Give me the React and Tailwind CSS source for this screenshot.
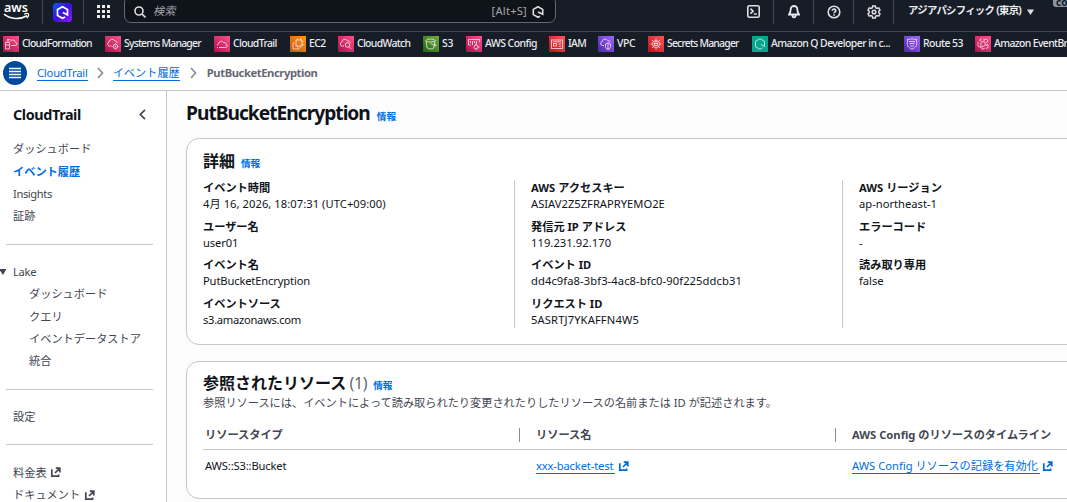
import React from "react";

const services = [
  { name: "CloudFormation", icon: "formation", width: "w-[102px]", color: "bg-linear-to-tr from-[#b0084d] to-[#ff4f8b]", tracking: "tracking-[-0.75px]" },
  { name: "Systems Manager", icon: "systems", width: "w-[109px]", color: "bg-linear-to-tr from-[#b0084d] to-[#ff4f8b]", tracking: "tracking-[-0.78px]" },
  { name: "CloudTrail", icon: "trail", width: "w-[76px]", color: "bg-linear-to-tr from-[#b0084d] to-[#ff4f8b]", tracking: "tracking-[-0.6px]" },
  { name: "EC2", icon: "ec2", width: "w-[48px]", color: "bg-linear-to-tr from-[#c8511b] to-[#ff9900]", tracking: "tracking-[-0.6px]" },
  { name: "CloudWatch", icon: "watch", width: "w-[85px]", color: "bg-linear-to-tr from-[#b0084d] to-[#ff4f8b]", tracking: "tracking-[-0.65px]" },
  { name: "S3", icon: "s3", width: "w-[43px]", color: "bg-linear-to-tr from-[#1b660f] to-[#6cae3e]", tracking: "tracking-[-0.3px]" },
  { name: "AWS Config", icon: "config", width: "w-[83px]", color: "bg-linear-to-tr from-[#b0084d] to-[#ff4f8b]", tracking: "tracking-[-0.5px]" },
  { name: "IAM", icon: "iam", width: "w-[49px]", color: "bg-linear-to-tr from-[#bd0816] to-[#ff5252]", tracking: "tracking-[-0.6px]" },
  { name: "VPC", icon: "vpc", width: "w-[50px]", color: "bg-linear-to-tr from-[#4d27a8] to-[#a166ff]", tracking: "tracking-[-0.4px]" },
  { name: "Secrets Manager", icon: "secrets", width: "w-[104px]", color: "bg-linear-to-tr from-[#bd0816] to-[#ff5252]", tracking: "tracking-[-0.78px]" },
  { name: "Amazon Q Developer in c...", icon: "q", width: "w-[152px]", color: "bg-[#01a88d]", tracking: "tracking-[-0.54px]" },
  { name: "Route 53", icon: "route", width: "w-[71px]", color: "bg-linear-to-tr from-[#4d27a8] to-[#a166ff]", tracking: "tracking-[-0.5px]" },
  { name: "Amazon EventBridge", icon: "bridge", width: "w-[130px]", color: "bg-linear-to-tr from-[#b0084d] to-[#ff4f8b]", tracking: "tracking-[-0.62px]" },
];

const glyphs = {
  formation: (
    <>
      <path d="M2.5 6.5h4v6.5h-4zM2.5 9h4M4 3.5h3.5M3.5 5h3" />
      <path d="M8 9.5h4a1.6 1.6 0 0 0 .4-3.2A2.7 2.7 0 0 0 7.3 5.5" />
    </>
  ),
  systems: (
    <>
      <path d="M6.5 10H4.4a2 2 0 0 1-.3-3.9A3 3 0 0 1 9.8 5a2 2 0 0 1 2.3 2" />
      <circle cx="10.4" cy="10.4" r="2.2" />
      <circle cx="10.4" cy="10.4" r=".5" />
      <path d="M10.4 7.5v.8M10.4 12.5v.9M7.5 10.4h.8M12.5 10.4h.9" />
    </>
  ),
  trail: <path d="M5 11.5h6.5a1.7 1.7 0 0 0 .5-3.3 1.8 1.8 0 0 0-2.3-1.6 2.6 2.6 0 0 0-4.9 1.1 1.9 1.9 0 0 0-1.6 1.6M3 11.5h1" />,
  ec2: (
    <>
      <rect x="6" y="4" width="6" height="6" />
      <path d="M4.5 7H3v6h6v-1.5M7.5 4V2.5M10.5 4V2.5M12 5.5h1.5M12 8.5h1.5M7.5 10v1.5M10.5 10v1.5" />
    </>
  ),
  watch: (
    <>
      <path d="M6 10H4a2 2 0 0 1-.2-3.9A3 3 0 0 1 9.5 5a2 2 0 0 1 2.7 1.8" />
      <circle cx="9.5" cy="9" r="2.3" />
      <path d="m11.2 10.8 2 2.2" />
    </>
  ),
  s3: (
    <>
      <ellipse cx="7.5" cy="4.5" rx="4.5" ry="1.5" />
      <path d="m3 4.5 1.2 7.5c.3 1.3 6.3 1.3 6.6 0L12 4.5M7.5 7.5l5 2.3c1.3.3.5-1.3-.6-1.8" />
    </>
  ),
  config: (
    <>
      <path d="M2.5 9V3.5h11V6M4.5 5v2M6.5 5v4M8.5 5v2M10.5 5v3M2.5 9H5" />
      <circle cx="10" cy="11" r="2" />
      <path d="M10 9V7.5M10 13v.8M12 11h1.5" />
    </>
  ),
  iam: (
    <>
      <rect x="2.5" y="4" width="11" height="8.5" />
      <rect x="4.5" y="7.5" width="3" height="2.5" />
      <path d="M4 5.8h8M9.5 8h2.5M9.5 10.3h2.5" />
    </>
  ),
  vpc: (
    <>
      <path d="M6 9.5H4.3a2 2 0 0 1-.2-3.9A3 3 0 0 1 9.7 4.6 2 2 0 0 1 12 6.3" />
      <path d="M10 7 7.5 8v2.5c0 1.5 1 2.4 2.5 3 1.5-.6 2.5-1.5 2.5-3V8zM10 7v6.5" />
    </>
  ),
  secrets: (
    <>
      <circle cx="8" cy="8" r="3.5" />
      <rect x="6.5" y="7.5" width="3" height="2" />
      <path d="M7 7.5v-1a1 1 0 0 1 2 0v1M8 2.5v2M8 11.5v2M2.5 8h2M11.5 8h2M4 4l1.5 1.5M12 4l-1.5 1.5M4 12l1.5-1.5M12 12l-1.5-1.5" />
    </>
  ),
  q: <path d="m10.5 11.8-2.5 1.5-4.5-2.6V5.3L8 2.7l4.5 2.6v5.2L8.8 8.3" />,
  route: <path d="M3.5 3c1.5 1 3 .3 4.5-.5 1.5.8 3 1.5 4.5.5v3.5c1 3-1 5-4.5 6.8C4.5 11.5 2.5 9.5 3.5 6.5zM5 5.5h6M5.5 7.5h5M6 9.5c1.3 1 2.7 1 4 0" />,
  bridge: (
    <>
      <path d="M8 5.5 10.2 6.7v2.6L8 10.5 5.8 9.3V6.7z" />
      <path d="M7 2.5 4.5 4l2 1.3M9 2.5v3M9 4l2.500-1 1.500 2-2 2M3 6v4l2.700 1.500V10M7 10.500v3l3-1.500M10.500 9.500 13 8.500v3l-2 1" />
    </>
  ),
};

const details = [
  [
    { label: "イベント時間", value: "4月 16, 2026, 18:07:31 (UTC+09:00)", tracking: "tracking-[0.05px]" },
    { label: "ユーザー名", value: "user01", tracking: "tracking-[-0.1px]" },
    { label: "イベント名", value: "PutBucketEncryption", tracking: "tracking-[-0.15px]" },
    { label: "イベントソース", value: "s3.amazonaws.com", tracking: "tracking-[-0.3px]" },
  ],
  [
    { label: "AWS アクセスキー", value: "ASIAV2Z5ZFRAPRYEMO2E" },
    { label: "発信元 IP アドレス", value: "119.231.92.170", tracking: "tracking-[0.05px]" },
    { label: "イベント ID", value: "dd4c9fa8-3bf3-4ac8-bfc0-90f225ddcb31", tracking: "tracking-[0.08px]" },
    { label: "リクエスト ID", value: "5ASRTJ7YKAFFN4W5", tracking: "tracking-[0.12px]" },
  ],
  [
    { label: "AWS リージョン", value: "ap-northeast-1" },
    { label: "エラーコード", value: "-" },
    { label: "読み取り専用", value: "false" },
  ],
];

function External() {
  return (
    <svg width="11" height="11" viewBox="0 0 11 11" fill="none" stroke="currentColor" strokeWidth="1.7">
      <path d="M1.8 2.2v7h6.8V7.5M5.8 1.200h4v4.300M9.600 1.400 5 6" />
    </svg>
  );
}

function Chevron() {
  return (
    <svg width="7" height="12" viewBox="0 0 7 12" fill="none" stroke="#8c8c94" strokeWidth="1.7">
      <path d="m1 1 4.5 5L1 11" />
    </svg>
  );
}

function Info() {
  return <a className="text-[9.6px] font-bold text-[#006ce0]">情報</a>;
}

function TopBar() {
  return (
    <div className="flex h-[31px] shrink-0 overflow-hidden text-[#ebebf0]">
      <svg width="42" height="24" viewBox="0 0 42 24" className="shrink-0">
        <text x="4" y="12" fontSize="12" fontWeight="600" fill="#fff" textLength="24" lengthAdjust="spacingAndGlyphs">
          aws
        </text>
        <path d="M4 14.2c7 5.500 16 5.500 23 1.600" stroke="#fff" strokeWidth="1.6" fill="none" />
        <path d="M24 14.2c2-.8 4-.8 4.400-.2.400.800-.4 2.800-1.600 4" stroke="#fff" strokeWidth="1.2" fill="none" />
      </svg>
      <div className="flex h-6 w-[42px] shrink-0 items-center justify-center border-x border-[#424650]">
        <svg width="19" height="19" viewBox="0 0 19 19" className="-ml-px">
          <defs>
            <linearGradient id="tile" x1="0" y1="0" x2="1" y2="1">
              <stop offset="0" stopColor="#0a5cf5" />
              <stop offset=".5" stopColor="#3b10d8" />
              <stop offset="1" stopColor="#8a1cff" />
            </linearGradient>
          </defs>
          <rect width="19" height="19" rx="3.5" fill="url(#tile)" />
          <path d="m12 14-2.500 1.300-5-2.900V6.600l5-2.900 5 2.900v5.200L9.800 9.500" stroke="#fff" strokeWidth="1.7" fill="none" />
        </svg>
      </div>
      <svg width="40" height="24" viewBox="0 0 40 24" fill="#ebebf0" className="shrink-0">
        <path d="M13 5h3v3h-3zM18 5h3v3h-3zM23 5h3v3h-3zM13 10h3v3h-3zM18 10h3v3h-3zM23 10h3v3h-3zM13 15h3v3h-3zM18 15h3v3h-3zM23 15h3v3h-3z" />
      </svg>
      <div className="-mt-1 flex h-[27px] w-[432px] shrink-0 items-center rounded-[7px] border border-[#656871] bg-[#0f141a] pt-[4px] pr-[11px] pl-[9px]">
        <svg width="12" height="12" viewBox="0 0 12 12" fill="none" stroke="#dedee3" strokeWidth="1.6">
          <circle cx="5" cy="5" r="4" />
          <path d="m8 8 3.500 3.500" />
        </svg>
        <span className="ml-[7px] grow text-[11.2px] text-[#a4a4ad] italic">検索</span>
        <span className="mr-[5px] text-[11.2px] tracking-[0.2px] text-[#a4a4ad]">[Alt+S]</span>
        <svg width="12" height="12" viewBox="0 0 12 12" fill="none" stroke="#dedee3" strokeWidth="1.6">
          <path d="M8 10.300 6 11.300 1.300 8.600V3.400L6 .7l4.700 2.700v4.800L6 6" />
        </svg>
      </div>
      <div className="ml-[178px] flex h-6 w-10 shrink-0 items-center justify-center border-r border-[#424650]">
        <svg width="13" height="13" viewBox="0 0 13 13" fill="none" stroke="#dedee3" strokeWidth="1.6" className="-mt-px">
          <rect x=".8" y=".8" width="11.4" height="11.4" rx="1.5" />
          <path d="m3.500 3.700 2.600 2.500L3.500 8.700M6.800 9h3" />
        </svg>
      </div>
      <div className="flex h-6 w-10 shrink-0 items-center justify-center border-r border-[#424650]">
        <svg width="12" height="14" viewBox="0 0 12 14" fill="none" stroke="#ebebf0" strokeWidth="1.8" className="-mt-px">
          <path d="M6 1a3.300 3.300 0 0 0-3.300 3.300c0 2.700-.7 3.400-1.700 5.200h10c-1-1.800-1.700-2.500-1.700-5.200A3.300 3.300 0 0 0 6 1zM4.500 10.500c0 2.500 3 2.500 3 0" />
        </svg>
      </div>
      <div className="flex h-6 w-10 shrink-0 items-center justify-center border-r border-[#424650]">
        <svg width="14" height="14" viewBox="0 0 14 14" fill="none" stroke="#dedee3" strokeWidth="1.6" className="-mt-px">
          <circle cx="7" cy="7" r="5.8" />
          <path d="M5.200 5.800c0-2.300 3.600-2.200 3.600 0C8.800 7 7 7 7 8.300M7 9.300v1.400" />
        </svg>
      </div>
      <div className="flex h-6 w-10 shrink-0 items-center justify-center border-r border-[#424650]">
        <svg width="14" height="14" viewBox="0 0 14 14" fill="none" stroke="#dedee3" strokeWidth="1.5" className="-mt-px">
          <path d="M5.700 1h2.600l.4 1.700 1.300.7 1.700-.5 1.300 2.200L11.800 6.300v1.400l1.200 1.200-1.300 2.200-1.700-.5-1.300.7-.4 1.700H5.700l-.4-1.700-1.300-.7-1.700.5L1 8.900l1.200-1.200V6.300L1 5.100l1.300-2.200 1.700.5 1.300-.7z" />
          <circle cx="7" cy="7" r="1.8" />
        </svg>
      </div>
      <div className="ml-[14px] flex h-[22px] shrink-0 items-center gap-1 text-[10.4px] font-bold">
        <span className="w-[115px] tracking-[-0.72px] whitespace-nowrap">アジアパシフィック (東京)</span>
        <svg width="7" height="6" viewBox="0 0 7 6" fill="#dedee3" className="mt-px">
          <path d="M0 .5h7L3.5 6z" />
        </svg>
      </div>
      <div className="ml-[19px] flex h-[7px] w-10 shrink-0 items-end overflow-hidden rounded-bl-[3px] bg-[#8c95a5] pl-[3px] text-[10px] leading-[10px] font-bold text-[#161d26]">co</div>
    </div>
  );
}

function Sidebar() {
  return (
    <nav className="flex w-[167px] shrink-0 flex-col border-r border-[#c6c6cd] bg-white pr-[13px] pl-[6px] text-[11.2px] leading-[22px] text-[#424650]">
      <div className="mt-[13px] flex h-[22px] items-center justify-between pr-[7px] pl-[7px]">
        <h2 className="text-[14.4px] font-bold tracking-[-0.4px] text-[#0f141a]">CloudTrail</h2>
        <svg width="7" height="11" viewBox="0 0 7 11" fill="none" stroke="#424650" strokeWidth="1.7" className="-mt-[2px]">
          <path d="M6 .8 1.300 5.500 6 10.200" />
        </svg>
      </div>
      <ul className="mt-3 pl-[7px]">
        <li className="h-[23px]">ダッシュボード</li>
        <li className="h-[22px] font-bold text-[#006ce0]">イベント履歴</li>
        <li className="h-[22px] tracking-[-0.4px]">Insights</li>
        <li className="h-[22px]">証跡</li>
      </ul>
      <hr className="mt-[17px] border-[#c6c6cd]" />
      <div className="mt-4 -ml-[6px] flex h-[22px] items-center gap-[7px] tracking-[-0.3px]">
        <svg width="6" height="6" viewBox="0 0 6 6" fill="#424650">
          <path d="M-1 0h7.5L3 6z" />
        </svg>
        Lake
      </div>
      <ul className="pl-[23px]">
        <li className="h-[23px]">ダッシュボード</li>
        <li className="h-[22px]">クエリ</li>
        <li className="h-[22px]">イベントデータストア</li>
        <li className="h-[22px]">統合</li>
      </ul>
      <hr className="mt-[17px] border-[#c6c6cd]" />
      <div className="mt-4 h-[22px] pl-[7px]">設定</div>
      <hr className="mt-4 border-[#c6c6cd]" />
      <ul className="mt-4 pl-[7px]">
        <li className="flex h-[23px] items-center gap-[3px]">料金表 <External /></li>
        <li className="flex h-[22px] items-center gap-1">ドキュメント <External /></li>
      </ul>
    </nav>
  );
}

function Details() {
  return (
    <section className="mt-[13px] h-[207px] w-[1000px] rounded-[13px] border border-[#c6c6cd] bg-white pt-[11px] pl-4">
      <div className="flex h-[22px] items-baseline gap-[6px]">
        <h2 className="text-[16px] leading-[22px] font-bold">詳細</h2>
        <Info />
      </div>
      <div className="mt-2 flex h-[148px]">
        {details.map((column, i) => (
          <dl key={i} className={i ? "w-[328px] shrink-0 border-l border-[#c6c6cd] pl-4" : "w-[311px] shrink-0"}>
            {column.map((item) => (
              <div key={item.label} className="h-[38.6px] whitespace-nowrap">
                <dt className="h-4 text-[11.2px] leading-4 font-bold">{item.label}</dt>
                <dd className={`h-4 text-[11.2px] leading-4 ${item.tracking || ""}`}>{item.value}</dd>
              </div>
            ))}
          </dl>
        ))}
      </div>
    </section>
  );
}

function Resources() {
  return (
    <section className="mt-4 h-[138px] w-[1000px] rounded-[13px] border border-[#c6c6cd] bg-white pt-[10px] pl-4">
      <div className="flex h-[22px] items-baseline gap-[6px]">
        <h2 className="text-[16px] leading-[22px] font-bold">
          参照されたリソース <span className="-ml-px font-normal tracking-[-0.3px] text-[#656871]">(1)</span>
        </h2>
        <Info />
      </div>
      <p className="mt-px h-4 text-[11.2px] leading-4 text-[#424650]">
        参照リソースには、イベントによって読み取られたり変更されたりしたリソースの名前または ID が記述されます。
      </p>
      <div className="mt-[9px] flex h-[30px] items-center border-b border-[#c6c6cd] text-[11.2px] font-bold text-[#424650]">
        <div className="w-[316px] pt-px pl-[2px]">リソースタイプ</div>
        <div className="flex h-[14px] w-[316px] items-center border-l border-[#8c8c94] pt-[2px] pl-4">リソース名</div>
        <div className="flex h-[14px] items-center border-l border-[#8c8c94] pt-[2px] pl-4">AWS Config のリソースのタイムライン</div>
      </div>
      <div className="flex h-[33px] items-center text-[11.2px]">
        <div className="w-[333px] pl-[2px] tracking-[-0.15px]">AWS::S3::Bucket</div>
        <a className="-mt-px flex w-[316px] items-center gap-[3px] text-[#006ce0]">
          <span className="border-b border-[#006ce0] pr-[2px] leading-[15px] tracking-[-0.15px]">xxx-backet-test</span>
          <External />
        </a>
        <a className="-mt-px flex items-center gap-[2px] text-[#006ce0]">
          <span className="border-b border-[#006ce0] pr-[2px] leading-[15px]">AWS Config リソースの記録を有効化</span>
          <External />
        </a>
      </div>
    </section>
  );
}

export default function App() {
  return (
    <div className="flex h-[502px] w-[1067px] flex-col overflow-hidden bg-[#fcfcfd] font-['Noto_Sans','Noto_Sans_CJK_JP',sans-serif] text-[#0f141a]">
      <header className="shrink-0 bg-[#161d26]">
        <TopBar />
        <div className="flex h-[26px] items-center border-t border-[#424650] pl-[3px]">
          {services.map((s) => (
            <div key={s.name} className={`-mt-px flex shrink-0 items-center gap-[3px] ${s.width}`}>
              <span className={`h-4 w-4 shrink-0 ${s.color}`}>
                <svg width="16" height="16" viewBox="0 0 16 16" fill="none" stroke="#ffe4ee" strokeWidth=".8">
                  {glyphs[s.icon]}
                </svg>
              </span>
              <span className={`text-[10.4px] font-medium whitespace-nowrap text-[#ebebf0] ${s.tracking}`}>{s.name}</span>
            </div>
          ))}
        </div>
      </header>
      <div className="flex h-[34px] shrink-0 items-center border-b border-[#c6c6cd] bg-white pb-px pl-[3px] text-[11.2px]">
        <svg width="24" height="24" viewBox="0 0 24 24" className="mr-[10px]">
          <circle cx="12" cy="12" r="12" fill="#004a9e" />
          <path d="M6 7.500h12M6 10.500h12M6 13.500h12M6 16.500h12" stroke="#fff" strokeWidth="1.5" />
        </svg>
        <a className="border-b border-[#006ce0] leading-[15px] tracking-[-0.2px] text-[#006ce0]">CloudTrail</a>
        <span className="mx-[9px]"><Chevron /></span>
        <a className="border-b border-[#006ce0] leading-[15px] text-[#006ce0]">イベント履歴</a>
        <span className="mr-[10px] ml-[10px]"><Chevron /></span>
        <span className="font-bold tracking-[-0.4px] text-[#656871]">PutBucketEncryption</span>
      </div>
      <div className="flex min-h-0 grow">
        <Sidebar />
        <main className="min-w-0 grow overflow-hidden pt-[10px] pl-[19px]">
          <div className="flex h-6 items-baseline gap-[7px]">
            <h1 className="text-[19.2px] leading-6 font-bold tracking-[-1px]">PutBucketEncryption</h1>
            <Info />
          </div>
          <Details />
          <Resources />
        </main>
      </div>
    </div>
  );
}
